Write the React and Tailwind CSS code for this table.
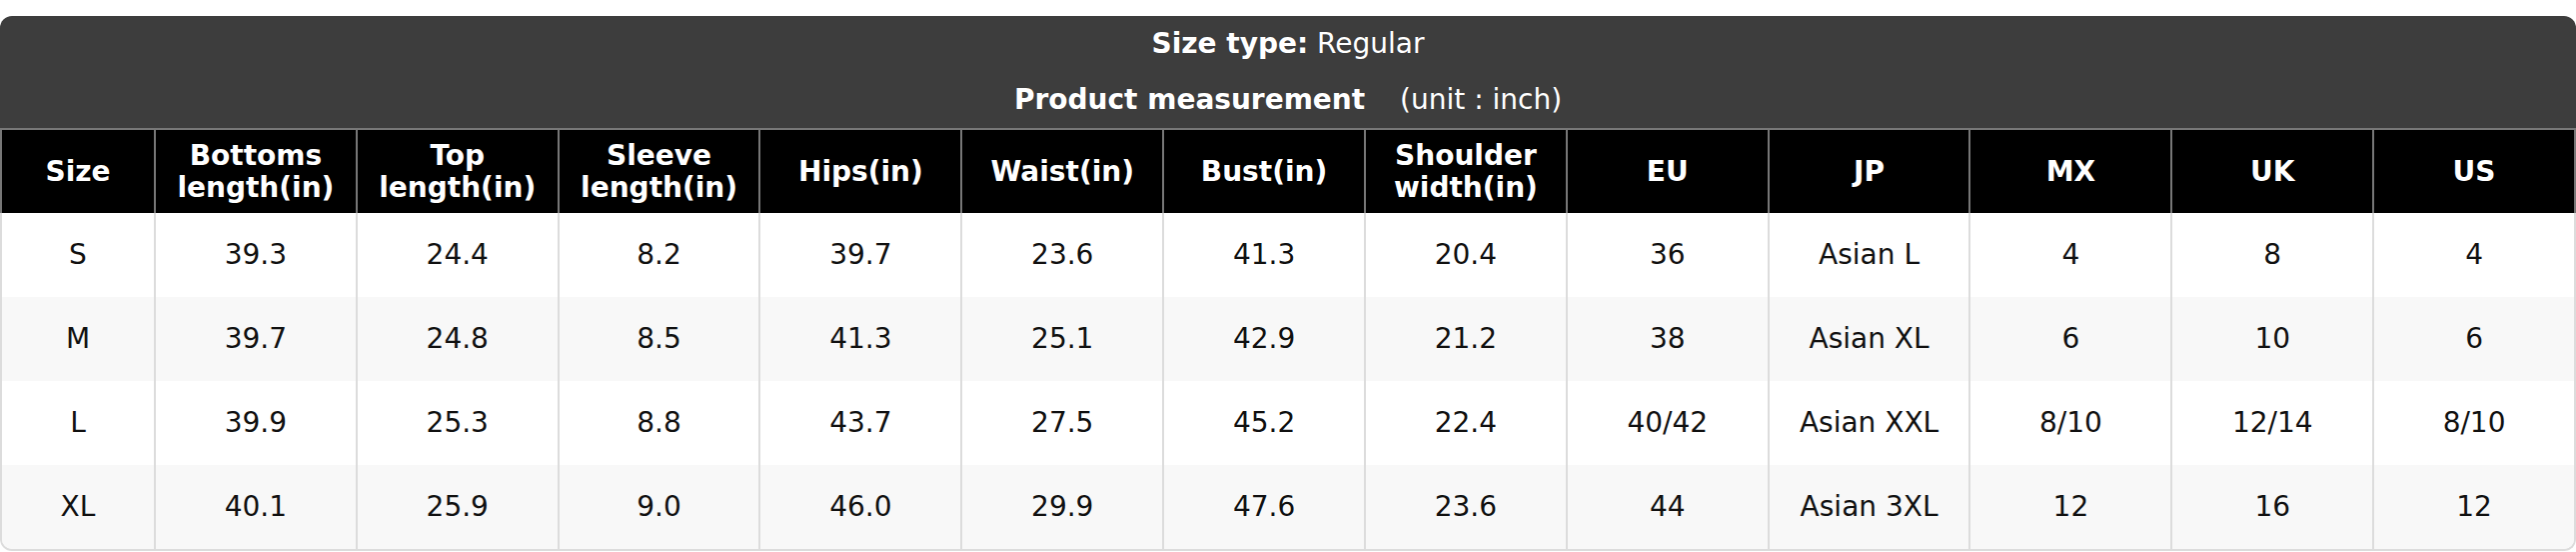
const headers = [
  ["Size"],
  ["Bottoms", "length(in)"],
  ["Top", "length(in)"],
  ["Sleeve", "length(in)"],
  ["Hips(in)"],
  ["Waist(in)"],
  ["Bust(in)"],
  ["Shoulder", "width(in)"],
  ["EU"],
  ["JP"],
  ["MX"],
  ["UK"],
  ["US"],
];

const rows = [
  ["S", "39.3", "24.4", "8.2", "39.7", "23.6", "41.3", "20.4", "36", "Asian L", "4", "8", "4"],
  ["M", "39.7", "24.8", "8.5", "41.3", "25.1", "42.9", "21.2", "38", "Asian XL", "6", "10", "6"],
  ["L", "39.9", "25.3", "8.8", "43.7", "27.5", "45.2", "22.4", "40/42", "Asian XXL", "8/10", "12/14", "8/10"],
  ["XL", "40.1", "25.9", "9.0", "46.0", "29.9", "47.6", "23.6", "44", "Asian 3XL", "12", "16", "12"],
];

export default function App() {
  return (
    <div className="w-[2578px] bg-white pt-4" style={{ fontFamily: "'DejaVu Sans', sans-serif" }}>
      <div className="w-full">
        <div className="rounded-t-xl bg-[#3d3d3d] text-center text-[28px] text-white">
          <div className="py-3 leading-8">
            <span className="font-bold">Size type:</span> Regular
          </div>
          <div className="py-3 leading-8">
            <span className="font-bold">Product measurement</span>
            <span className="ml-[26px]"> (unit : inch)</span>
          </div>
        </div>
        <div className="grid grid-cols-[152px_repeat(12,1fr)] border-x-2 border-t-2 border-[#777] bg-black">
          {headers.map((h, i) => (
            <div
              key={i}
              className={`flex h-[83px] flex-col items-center justify-center text-center text-[28px] font-bold leading-[32px] text-white ${i > 0 ? "border-l-2 border-[#777]" : ""}`}
            >
              {h.map((line, j) => (
                <div key={j}>{line}</div>
              ))}
            </div>
          ))}
        </div>
        <div className="overflow-hidden rounded-b-xl border-x-2 border-b-2 border-[#dcdcdc]">
          {rows.map((r, ri) => (
            <div
              key={ri}
              className={`grid grid-cols-[152px_repeat(12,1fr)] ${ri % 2 === 1 ? "bg-[#f8f8f8]" : "bg-white"}`}
            >
              {r.map((c, ci) => (
                <div
                  key={ci}
                  className={`flex h-[84px] items-center justify-center text-[28px] text-[#111] ${ci > 0 ? "border-l-2 border-[#dcdcdc]" : ""}`}
                >
                  {c}
                </div>
              ))}
            </div>
          ))}
        </div>
      </div>
    </div>
  );
}
